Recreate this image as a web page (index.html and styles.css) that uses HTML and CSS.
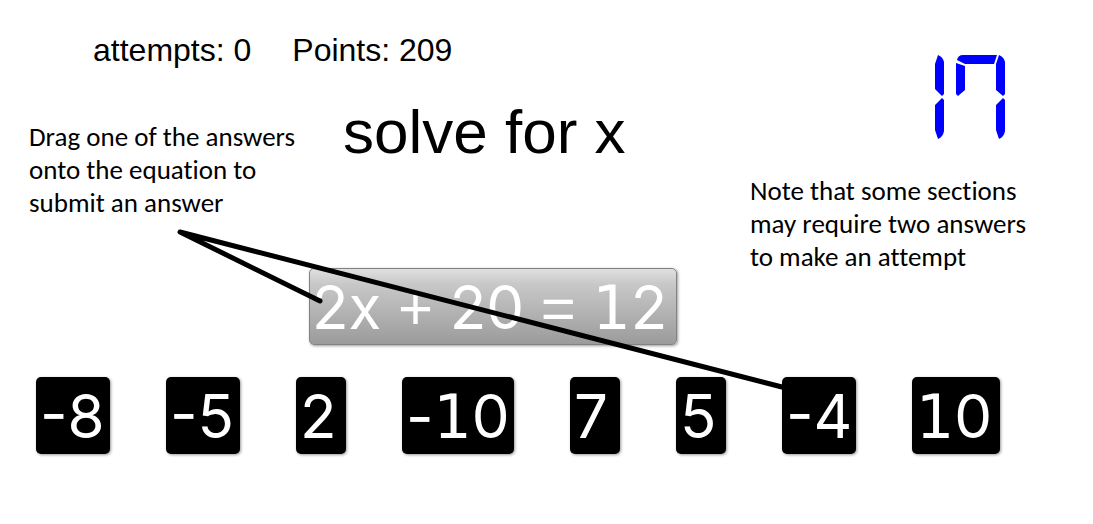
FILE: index.html
```html
<!DOCTYPE html>
<html lang="en">
<head>
<meta charset="utf-8">
<meta name="viewport" content="width=device-width, initial-scale=1">
<title>Solve for x</title>
<link rel="stylesheet" href="styles.css">
</head>
<body>
<main class="game">
  <section class="stage">
    <div class="score"><span>attempts: 0</span><span>Points: 209</span></div>
    <p class="note note-drag">Drag one of the answers<br>onto the equation to<br>submit an answer</p>
    <div class="problem">
      <h1 class="title">solve for x</h1>
      <button class="equation" type="button">2x<span class="operator"> + </span>20<span class="operator"> = </span><span class="one">1</span>2</button>
    </div>
    <aside class="side">
      <svg class="timer" viewBox="0 0 70 84" role="img" aria-label="17 seconds">
        <path d="M0 9 3 0Q8 2 9 7V39L7 41 0 34ZM0 50 7 43 9 45V76Q8 82 3 84L0 75Z"/>
        <path d="M22 5Q23 0 28 0H62L59 9H30ZM21 8 30 11V35L23 41 21 39Z"/>
        <path d="M64 0Q69 2 70 7V39L68 41 61 35V9ZM61 50 68 43 70 45V76Q69 82 64 84L61 75Z"/>
      </svg>
      <p class="note">Note that some sections<br>may require two answers<br>to make an attempt</p>
    </aside>
  </section>
  <div class="answers">
    <button class="answer signed" type="button">-8</button>
    <button class="answer signed" type="button">-5</button>
    <button class="answer" type="button">2</button>
    <button class="answer signed-double" type="button">-<span class="one">1</span>0</button>
    <button class="answer" type="button">7</button>
    <button class="answer" type="button">5</button>
    <button class="answer signed" type="button">-4</button>
    <button class="answer double" type="button"><span class="one">1</span>0</button>
  </div>
  <svg class="pointer" width="800" height="400" viewBox="0 0 800 400" aria-hidden="true">
    <path d="M320 301 180 232 782 387"/>
  </svg>
</main>
</body>
</html>
```
FILE: styles.css
```css
* { box-sizing: border-box; }
body {
  margin: 0;
  background: #fff;
  color: #000;
  font-family: "Liberation Sans", Arial, sans-serif;
}
.game { position: relative; padding: 32px 0 70px; }
.stage {
  display: grid;
  grid-template-columns: 280px 441px 1fr;
  grid-template-rows: 36px auto;
  padding-left: 29px;
}
.score {
  grid-column: 1 / 3;
  display: flex;
  gap: 41px;
  padding-left: 64px;
  font-size: 32px;
  line-height: 36px;
}
.note {
  margin: 0;
  font-family: Carlito, "Noto Sans", sans-serif;
  font-size: 27px;
  line-height: 33px;
  font-variant-ligatures: none;
  white-space: nowrap;
}
.note-drag { grid-column: 1; padding-top: 52px; }
.problem { grid-column: 2; padding-top: 26px; }
.title {
  margin: 0 0 98px;
  padding-left: 34px;
  font-size: 62px;
  line-height: 76px;
  font-weight: 400;
  white-space: nowrap;
}
.side { grid-column: 3; grid-row: 1 / 3; padding-top: 23px; }
.timer {
  display: block;
  width: 70px;
  height: 84px;
  margin: 0 0 35px 185px;
  fill: #00f;
}
.equation, .answer {
  display: block;
  height: 77px;
  padding: 0 4px;
  border: 0;
  border-radius: 5px;
  color: #fff;
  background: #000;
  font-family: Inter, "Liberation Sans", sans-serif;
  font-size: 60px;
  line-height: 72px;
  text-align: left;
  white-space: nowrap;
  box-shadow: 1px 1px 3px rgba(0, 0, 0, .4);
}
.equation {
  width: 368px;
  padding: 0 2px;
  border: 1px solid #828282;
  background: linear-gradient(#e0e0e0, #c8c8c8 20%, #9b9b9b);
}
.one { font-family: "DejaVu Sans", sans-serif; line-height: 1; }
.operator { font-family: "Liberation Sans", Arial, sans-serif; line-height: 1; }
.answers { display: flex; gap: 56px; padding: 32px 0 0 36px; }
.answer { flex: none; width: 50px; }
.signed { width: 74px; }
.double { width: 88px; }
.signed-double { width: 112px; }
.pointer { position: absolute; left: 0; top: 0; pointer-events: none; }
.pointer path {
  fill: none;
  stroke: #000;
  stroke-width: 5;
  stroke-linejoin: round;
  stroke-linecap: round;
}
```
